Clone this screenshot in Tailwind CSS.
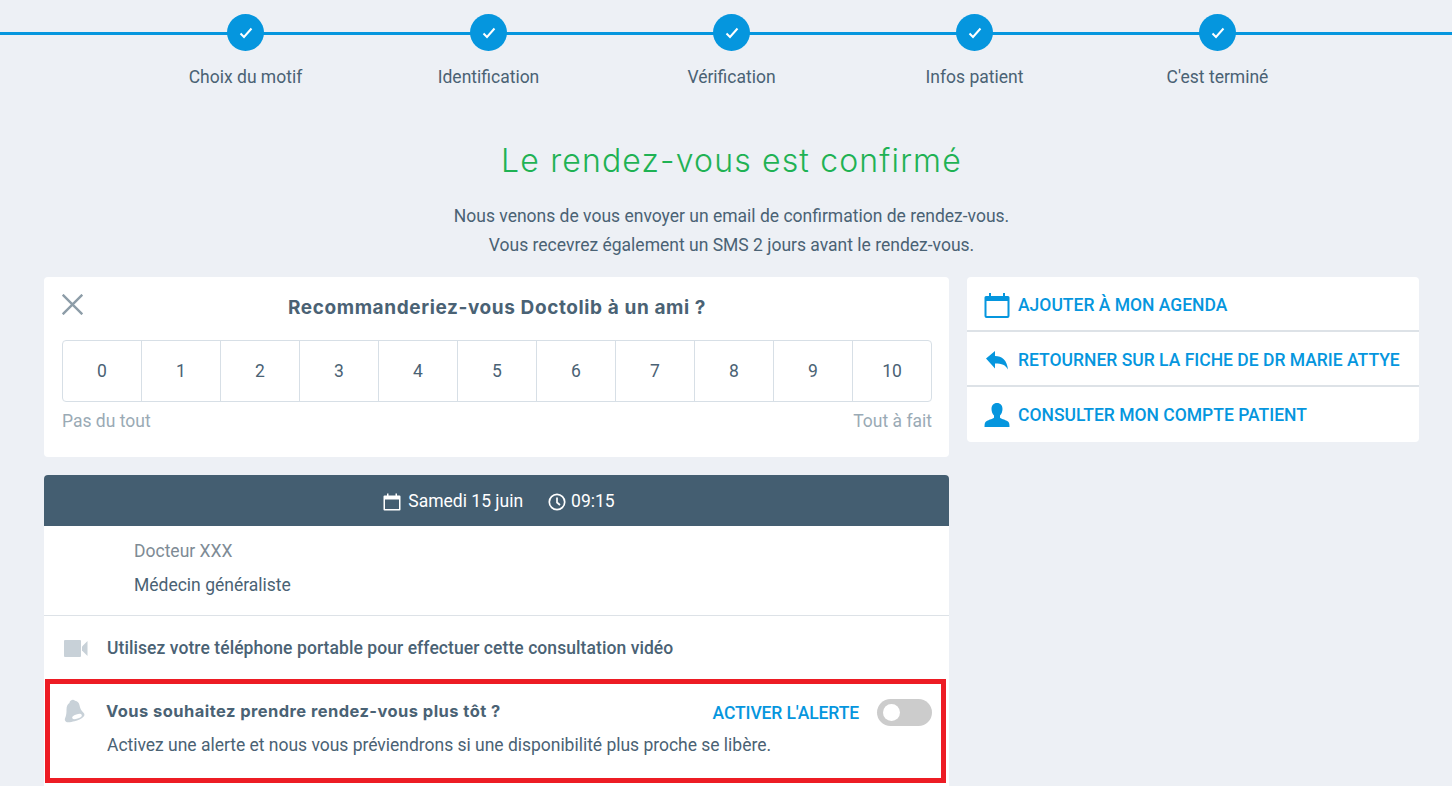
<!DOCTYPE html>
<html lang="fr">
<head>
<meta charset="utf-8">
<script src="https://cdn.jsdelivr.net/npm/@tailwindcss/browser@4"></script>
<title>Doctolib</title>
</head>
<body class="bg-[#edf0f5] font-['Roboto',sans-serif] text-[#4a6274] h-[786px] overflow-hidden relative text-[17.5px]">
  <div class="relative h-[91px] pt-[14px]">
    <div class="absolute left-0 right-0 top-[32px] h-[3px] bg-[#0596de]"></div>
    <div class="relative ml-[124px] w-[1215px] grid grid-cols-5">
      <div class="flex flex-col items-center">
        <div class="w-[37px] h-[37px] rounded-full bg-[#0596de] flex items-center justify-center"><svg width="14" height="14" viewBox="0 0 14 14" fill="none" stroke="#fff" stroke-width="2"><path d="M1.5 7.5 5 11l7.5-8.5"/></svg></div>
        <div class="mt-[14px] leading-[24px]">Choix du motif</div>
      </div>
      <div class="flex flex-col items-center">
        <div class="w-[37px] h-[37px] rounded-full bg-[#0596de] flex items-center justify-center"><svg width="14" height="14" viewBox="0 0 14 14" fill="none" stroke="#fff" stroke-width="2"><path d="M1.5 7.5 5 11l7.5-8.5"/></svg></div>
        <div class="mt-[14px] leading-[24px]">Identification</div>
      </div>
      <div class="flex flex-col items-center">
        <div class="w-[37px] h-[37px] rounded-full bg-[#0596de] flex items-center justify-center"><svg width="14" height="14" viewBox="0 0 14 14" fill="none" stroke="#fff" stroke-width="2"><path d="M1.5 7.5 5 11l7.5-8.5"/></svg></div>
        <div class="mt-[14px] leading-[24px]">Vérification</div>
      </div>
      <div class="flex flex-col items-center">
        <div class="w-[37px] h-[37px] rounded-full bg-[#0596de] flex items-center justify-center"><svg width="14" height="14" viewBox="0 0 14 14" fill="none" stroke="#fff" stroke-width="2"><path d="M1.5 7.5 5 11l7.5-8.5"/></svg></div>
        <div class="mt-[14px] leading-[24px]">Infos patient</div>
      </div>
      <div class="flex flex-col items-center">
        <div class="w-[37px] h-[37px] rounded-full bg-[#0596de] flex items-center justify-center"><svg width="14" height="14" viewBox="0 0 14 14" fill="none" stroke="#fff" stroke-width="2"><path d="M1.5 7.5 5 11l7.5-8.5"/></svg></div>
        <div class="mt-[14px] leading-[24px]">C'est terminé</div>
      </div>
    </div>
  </div>

  <div class="ml-[44px] w-[1375px]">
    <h1 class="mt-[48px] text-center text-[#1fb254] text-[32px] leading-[44px] font-light font-['Inter',sans-serif] tracking-[1.15px]">Le rendez-vous est confirmé</h1>
    <div class="mt-[19px] text-center leading-[29px]">
      <p>Nous venons de vous envoyer un email de confirmation de rendez-vous.</p>
      <p>Vous recevrez également un SMS 2 jours avant le rendez-vous.</p>
    </div>

    <div class="mt-[17px] flex items-start gap-[18px]">
      <div class="w-[905px] flex flex-col gap-[18px]">
        <section class="relative bg-white rounded-[4px] h-[180px] pt-[18px] pl-[18px] pr-[17px]">
          <svg class="absolute left-[18px] top-[17px]" width="21" height="21" viewBox="0 0 21 21" fill="none" stroke="#8d9da8" stroke-width="2.400"><path d="M.7.7l19.6 19.6M20.3.7.7 20.300"/></svg>
          <h2 class="text-center text-[19px] leading-[26px] font-bold font-['Inter',sans-serif] tracking-[0.6px]">Recommanderiez-vous Doctolib à un ami ?</h2>
          <div class="mt-[19px] h-[62px] border border-[#d7dfe6] rounded-[4px] grid grid-cols-[repeat(10,79px)_1fr]">
            <div class="flex items-center justify-center border-r border-[#d7dfe6]">0</div>
            <div class="flex items-center justify-center border-r border-[#d7dfe6]">1</div>
            <div class="flex items-center justify-center border-r border-[#d7dfe6]">2</div>
            <div class="flex items-center justify-center border-r border-[#d7dfe6]">3</div>
            <div class="flex items-center justify-center border-r border-[#d7dfe6]">4</div>
            <div class="flex items-center justify-center border-r border-[#d7dfe6]">5</div>
            <div class="flex items-center justify-center border-r border-[#d7dfe6]">6</div>
            <div class="flex items-center justify-center border-r border-[#d7dfe6]">7</div>
            <div class="flex items-center justify-center border-r border-[#d7dfe6]">8</div>
            <div class="flex items-center justify-center border-r border-[#d7dfe6]">9</div>
            <div class="flex items-center justify-center">10</div>
          </div>
          <div class="mt-[8px] flex justify-between leading-[22px] text-[#9aaab5]"><span>Pas du tout</span><span>Tout à fait</span></div>
        </section>

        <section class="bg-white rounded-t-[4px] h-[311px]">
          <div class="h-[51px] bg-[#445e71] rounded-t-[4px] flex items-center justify-center text-white pl-[5px] pt-[2px]">
            <svg class="mr-[7px]" width="18" height="18" viewBox="0 0 18 18" fill="#fff"><path fill-rule="evenodd" d="M1.500 2.500H4V.5h1.500v2h7v-2H14v2h2.500A1 1 0 0 1 17.500 3.500V16.500A1 1 0 0 1 16.500 17.500H1.500A1 1 0 0 1 .5 16.500V3.500A1 1 0 0 1 1.500 2.500zM2 6.500V16h14V6.500z"/></svg>
            <span>Samedi 15 juin</span>
            <svg class="ml-[25px] mr-[5px]" width="18" height="18" viewBox="0 0 18 18" fill="none" stroke="#fff" stroke-width="1.700"><circle cx="9" cy="9" r="7.700"/><path d="M9 4.500V9.500l3 2.500"/></svg>
            <span>09:15</span>
          </div>
          <div class="h-[90px] border-b border-[#dde2e7] pl-[90px] pt-[12px]">
            <div class="leading-[26px] text-[#7e8b95]">Docteur XXX</div>
            <div class="mt-[8px] leading-[26px]">Médecin généraliste</div>
          </div>
          <div class="h-[64px] flex items-center pl-[20px]">
            <svg width="24" height="17" viewBox="0 0 24 17" fill="#c8d1d8"><rect x="0" y="0" width="17" height="17" rx="1"/><path d="M18 6.500 23.500 1v15L18 10.500z"/></svg>
            <span class="ml-[19px] font-medium tracking-[0.07px]">Utilisez votre téléphone portable pour effectuer cette consultation vidéo</span>
          </div>
          <div class="pl-[20px] pr-[17px] flex pt-[21px]">
            <svg class="mt-[-2px] shrink-0" width="22" height="24" viewBox="0 0 22 24" fill="#c8d1d8"><path d="M7 1.500c1-1 3-1 4 .2 2.500.3 4 2 4.500 4.500.5 3 1.500 5 4 7.500 1 1 1.500 2.500 0 4-2 2-5.500 3.500-9 4.500-3 .8-7 1.500-8.500.500C1 22 .5 20.500 1 19.500c1.500-3.500 1.500-6 1.500-9 0-3 1-5.500 3-6.500 0-1 .5-2 1.500-2.500z"/><ellipse cx="13" cy="17.500" rx="5" ry="2.200" transform="rotate(-18 13 17.500)" fill="#fff"/></svg>
            <div class="ml-[21px] flex-1">
              <div class="flex justify-between items-start h-[27px]">
                <div class="text-[16.500px] leading-[24px] font-bold font-['Inter',sans-serif] mt-[-2px] ml-[-1px] tracking-[0.44px]">Vous souhaitez prendre rendez-vous plus tôt ?</div>
                <div class="flex items-center mt-[-2px]">
                  <span class="text-[#0596de] font-medium tracking-[-0.1px] pt-[1px]">ACTIVER L'ALERTE</span>
                  <span class="ml-[18px] w-[55px] h-[27px] bg-[#cccccc] rounded-full flex items-center pl-[6px]"><span class="w-[17px] h-[17px] bg-white rounded-full"></span></span>
                </div>
              </div>
              <div class="mt-[5px] leading-[24px] tracking-[-0.02px]">Activez une alerte et nous vous préviendrons si une disponibilité plus proche se libère.</div>
            </div>
          </div>
        </section>
      </div>

      <aside class="w-[452px] bg-white rounded-[4px] text-[#0596de] font-medium">
        <div class="h-[55px] flex items-center pl-[17px] pt-[3px] gap-[8px] border-b-2 border-[#dde2e7]">
          <svg width="26" height="25" viewBox="0 0 26 25" fill="#0596de"><path fill-rule="evenodd" d="M2 3h3V0h2v3h12V0h2v3h3a1.500 1.500 0 0 1 1.500 1.500V23A2 2 0 0 1 23.500 25h-21A2 2 0 0 1 .5 23V4.500A1.500 1.500 0 0 1 2 3zm.5 5v14.500a.5.500 0 0 0 .5.500h20a.5.500 0 0 0 .5-.5V8z"/></svg>
          <span>AJOUTER À MON AGENDA</span>
        </div>
        <div class="h-[55px] flex items-center pl-[17px] pt-[3px] gap-[8px] border-b-2 border-[#dde2e7]">
          <svg width="26" height="20" viewBox="0 0 26 20" fill="#0596de"><path d="M2 8.500 11 1v5c7 0 12 4 13 13.500-2.500-4.500-6-6-13-6v5z"/></svg>
          <span>RETOURNER SUR LA FICHE DE DR MARIE ATTYE</span>
        </div>
        <div class="h-[55px] flex items-center pl-[17px] pt-[1px] gap-[8px]">
          <svg width="26" height="24" viewBox="0 0 26 24" fill="#0596de"><path d="M13 0c3.500 0 5.500 2.500 5.500 6 0 2.500-1 5-2.500 6.500v2c0 1 5 2 8 4 1 .7 1.500 2 1.500 5.500H.5c0-3.500.5-4.800 1.500-5.500 3-2 8-3 8-4v-2C8.500 11 7.500 8.500 7.500 6 7.500 2.500 9.500 0 13 0z"/></svg>
          <span>CONSULTER MON COMPTE PATIENT</span>
        </div>
      </aside>
    </div>
  </div>

  <div class="absolute left-[45px] top-[679px] w-[901px] h-[104px] border-[5px] border-[#ed1c24]"></div>
</body>
</html>
